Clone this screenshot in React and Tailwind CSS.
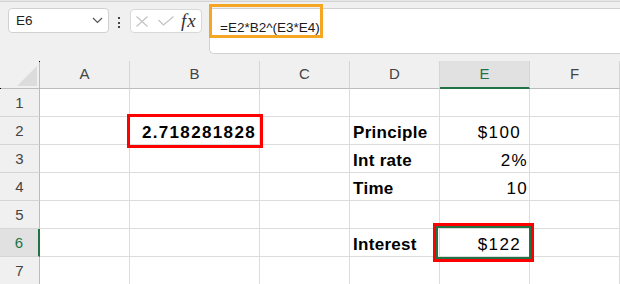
import React from "react";

const cols = ["A", "B", "C", "D", "E", "F"];

const data = {
  2: { B: { t: "2.718281828", b: true, r: true, pr: "pr-[3px]" }, D: { t: "Principle", b: true }, E: { t: "$100", r: true, pr: "pr-[8px]" } },
  3: { D: { t: "Int rate", b: true }, E: { t: "2%", r: true, pr: "pr-[1px]" } },
  4: { D: { t: "Time", b: true }, E: { t: "10", r: true, pr: "pr-[1px]" } },
  6: { D: { t: "Interest", b: true }, E: { t: "$122", r: true, pr: "pr-[8px]" } },
};

function Cell({ c }) {
  if (!c) return null;
  return (
    <span
      className={
        (c.r ? "ml-auto tracking-[1.35px] " : "pl-[3px] tracking-[0.3px] ") +
        (c.b ? "font-bold " : "") +
        (c.pr || "")
      }
    >
      {c.t}
    </span>
  );
}

export default function App() {
  return (
    <div className="relative w-[620px] h-[284px] overflow-hidden bg-white font-['Liberation_Sans',Arial,sans-serif] text-black">
      {/* Top formula bar region */}
      <div className="relative h-[61px] bg-[#f0f0f0]">
        <div className="h-[1px] bg-[#e6e6e6]" />
        <div className="h-[1px] bg-[#d3d3d3]" />
        <div className="flex items-start pl-[8px]">
          <div className="mt-[6px] w-[101px] h-[25px] rounded-[4px] border border-[#d1d1d1] bg-white flex items-center justify-between pl-[7px] pr-[5px]">
            <span className="text-[13.5px] leading-[16px] text-[#222]">E6</span>
            <svg width="11" height="7" viewBox="0 0 11 7">
              <path d="M1 1 L5.5 5.5 L10 1" fill="none" stroke="#555" strokeWidth="1.2" />
            </svg>
          </div>
          <div className="ml-[9px] mt-[15px] flex flex-col gap-[2.5px]">
            <span className="block w-[2px] h-[2px] bg-[#444]" />
            <span className="block w-[2px] h-[2px] bg-[#444]" />
            <span className="block w-[2px] h-[2px] bg-[#444]" />
          </div>
          <div className="ml-[10px] mt-[7px] w-[72px] h-[24px] rounded-[4px] border border-[#d8d8d8] bg-white flex items-center pl-[5px]">
            <svg width="12" height="11" viewBox="0 0 12 11">
              <path d="M0.5 0.5 L11.5 10.5 M11.5 0.5 L0.5 10.5" stroke="#c2c2c2" strokeWidth="1.1" fill="none" />
            </svg>
            <svg width="16" height="10" viewBox="0 0 16 10" className="ml-[10px]">
              <path d="M0.5 4 L5.5 9 L15.5 0.5" stroke="#c2c2c2" strokeWidth="1.1" fill="none" />
            </svg>
            <span className="ml-[7px] font-['Liberation_Serif',serif] italic text-[19px] leading-[16px] tracking-[1px] text-[#333]">
              fx
            </span>
          </div>
          <div className="ml-[7px] mt-[6px] flex-1 h-[46px] bg-white border-l border-t border-b border-[#d1d1d1] rounded-bl-[5px] rounded-tl-[4px] pl-[10px] pt-[6px]">
            <span className="text-[13.5px] leading-[16px] text-[#1a1a1a]">=E2*B2^(E3*E4)</span>
          </div>
        </div>
        <div className="absolute left-[209px] top-[4px] w-[114px] h-[34px] border-[3px] border-[#f5a623]" />
      </div>

      {/* Grid */}
      <div className="grid grid-cols-[40px_90px_130px_90px_90px_90px_1fr]">
        <div className="relative h-[28px] bg-[#f0f0f0] border-r border-b border-[#bcbcbc]">
          <svg width="20" height="20" viewBox="0 0 20 20" className="absolute right-[2px] bottom-[2px]">
            <polygon points="20,0 20,20 0,20" fill="#dcdcdc" />
          </svg>
        </div>
        {cols.map((c) =>
          c === "E" ? (
            <div
              key={c}
              className="h-[28px] bg-[#e1e1e1] border-r border-r-[#d5d5d5] border-b-2 border-b-[#217346] flex items-center justify-center text-[15px] text-[#217346]"
            >
              {c}
            </div>
          ) : (
            <div
              key={c}
              className="h-[28px] bg-[#f0f0f0] border-r border-r-[#d5d5d5] border-b border-b-[#bcbcbc] flex items-center justify-center text-[15px] text-[#444]"
            >
              {c}
            </div>
          )
        )}

        {[1, 2, 3, 4, 5, 6, 7].map((r) => (
          <React.Fragment key={r}>
            {r === 6 ? (
              <div className="h-[28px] bg-[#e1e1e1] border-r-2 border-r-[#217346] border-b border-b-[#d5d5d5] flex items-center justify-center pt-[2px] text-[15px] text-[#217346]">
                {r}
              </div>
            ) : (
              <div className="h-[28px] bg-[#f0f0f0] border-r border-r-[#bcbcbc] border-b border-b-[#d5d5d5] flex items-center justify-center pt-[2px] text-[15px] text-[#444]">
                {r}
              </div>
            )}
            {cols.map((c) => (
              <div
                key={c}
                className="h-[28px] bg-white border-r border-b border-[#dcdcdc] flex items-end pb-[1px] text-[17px] leading-[20px] whitespace-nowrap"
              >
                <Cell c={data[r] && data[r][c]} />
              </div>
            ))}
          </React.Fragment>
        ))}
      </div>

      {/* Overlays */}
      <div className="absolute left-[127px] top-[114px] w-[136px] h-[34px] border-[3px] border-[#ff0000]" />
      <div className="absolute left-[436px] top-[226px] w-[95px] h-[33px] border-2 border-[#217346]" />
      <div className="absolute left-[433px] top-[223px] w-[101px] h-[39px] border-[3px] border-[#ff0000]" />
      <span className="absolute left-[526px] top-[254px] w-[2px] h-[2px] bg-white" />
      <span className="absolute left-[39px] top-[61px] w-[1px] h-[1px] bg-black" />
      <span className="absolute left-[0px] top-[88px] w-[1px] h-[1px] bg-black" />
    </div>
  );
}
